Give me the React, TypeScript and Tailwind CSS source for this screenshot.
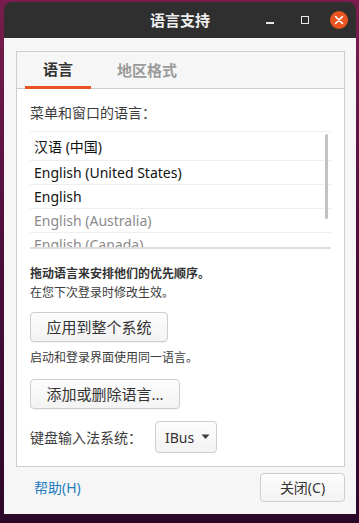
import React from "react";

const rows: { text: string; dim?: boolean }[] = [
  { text: "汉语 (中国)" },
  { text: "English (United States)" },
  { text: "English" },
  { text: "English (Australia)", dim: true },
  { text: "English (Canada)", dim: true },
];

function Btn({ children, w }: { children: React.ReactNode; w: string }) {
  return (
    <div
      className={`${w} h-[30px] flex items-center justify-center rounded-[4px] border border-[#cdcdcd] bg-gradient-to-b from-[#fdfdfd] to-[#f3f3f3] text-[15px] text-[#333] shadow-[0_1px_0_rgba(0,0,0,0.04)]`}
    >
      {children}
    </div>
  );
}

export default function App() {
  return (
    <div className="w-[359px] h-[523px] overflow-hidden bg-gradient-to-b from-[#7a1d4e] via-[#4a0d3b] to-[#2c0828] pl-[4px] pt-[2px] font-['Noto_Sans','Noto_Sans_CJK_SC',sans-serif]">
      <div className="w-[352px] h-[512px] flex flex-col">
        {/* Title bar */}
        <div className="h-[36px] bg-[#2f2f2f] rounded-t-[8px] grid grid-cols-[1fr_auto_1fr] items-center">
          <div />
          <div className="text-[15px] font-bold text-[#eeeeee] leading-none">语言支持</div>
          <div className="flex items-center justify-end pr-[8px] h-full">
            <div className="w-[8px] h-[2px] bg-[#e6e6e6] mt-[5px]" />
            <div className="w-[8px] h-[8px] border-[1.5px] border-[#e6e6e6] ml-[27px]" />
            <div className="w-[18px] h-[18px] rounded-full bg-[#e95420] ml-[21px] flex items-center justify-center">
              <svg width="10" height="10" viewBox="0 0 10 10">
                <path d="M1.5 1.5 L8.5 8.5 M8.5 1.5 L1.5 8.5" stroke="#fff" strokeWidth="1.6" strokeLinecap="round" />
              </svg>
            </div>
          </div>
        </div>
        {/* Body */}
        <div className="flex-1 bg-[#f6f6f6] pl-[12px] pr-[11px] pt-[13px] flex flex-col">
          <div className="h-[416px] border border-[#cdcdcd] bg-white flex flex-col">
            {/* Tabs */}
            <div className="h-[37px] bg-[#f6f6f6] border-b border-[#cdcdcd] flex pl-[8px] shrink-0">
              <div className="w-[66px] h-[37px] -mb-px border-b-[3px] border-[#e95420] flex items-center justify-center text-[15px] font-bold text-[#333]">
                语言
              </div>
              <div className="w-[112px] h-[36px] flex items-center justify-center text-[15px] font-bold text-[#9a9a9a]">
                地区格式
              </div>
            </div>
            {/* Content */}
            <div className="flex-1 px-[13px] pt-[14px] flex flex-col">
              <div className="h-[20px] leading-[20px] text-[14px] text-[#3c3c3c]">菜单和窗口的语言：</div>
              <div className="relative mt-[8px] h-[118px] border-t border-[#efefef] border-b-2 border-b-[#dcdcdc] overflow-hidden">
                {rows.map((r, i) => (
                  <div
                    key={i}
                    className={`${i === 0 ? "h-[29px]" : "h-[24px]"} border-b border-[#efefef] flex items-center pl-[4px] text-[14px] ${
                      r.dim ? "text-[#8a8a8a]" : "text-[#111]"
                    }`}
                  >
                    {r.text}
                  </div>
                ))}
                <div className="absolute right-[3px] top-[2px] w-[3px] h-[85px] bg-[#c2c2c2] rounded-[2px]" />
              </div>
              <div className="mt-[15px] h-[19px] leading-[19px] text-[12px] font-bold text-[#333]">
                拖动语言来安排他们的优先顺序。
              </div>
              <div className="h-[19px] leading-[19px] text-[12px] text-[#3c3c3c]">在您下次登录时修改生效。</div>
              <div className="mt-[10px]">
                <Btn w="w-[138px]">应用到整个系统</Btn>
              </div>
              <div className="mt-[6px] h-[19px] leading-[19px] text-[12px] text-[#3c3c3c]">启动和登录界面使用同一语言。</div>
              <div className="mt-[12px]">
                <Btn w="w-[150px]">添加或删除语言...</Btn>
              </div>
              <div className="mt-[12px] flex items-center">
                <div className="w-[125px] text-[14px] text-[#3c3c3c]">键盘输入法系统：</div>
                <div className="w-[62px] h-[32px] rounded-[4px] border border-[#cdcdcd] bg-gradient-to-b from-[#fdfdfd] to-[#f3f3f3] flex items-center pl-[9px] text-[14px] text-[#333]">
                  IBus
                  <svg className="ml-[7px]" width="9" height="6" viewBox="0 0 9 6">
                    <path d="M0.5 0.5 L8.5 0.5 L4.5 5 Z" fill="#3c3c3c" />
                  </svg>
                </div>
              </div>
            </div>
          </div>
          {/* Footer */}
          <div className="flex justify-between pt-[6px]">
            <div className="pl-[18px] h-[29px] flex items-center text-[14px] text-[#1f7cc0]">帮助(H)</div>
            <div className="w-[85px] h-[29px] rounded-[4px] border border-[#cdcdcd] bg-gradient-to-b from-[#fdfdfd] to-[#f3f3f3] flex items-center justify-center text-[14px] text-[#333]">
              关闭(C)
            </div>
          </div>
        </div>
      </div>
    </div>
  );
}
